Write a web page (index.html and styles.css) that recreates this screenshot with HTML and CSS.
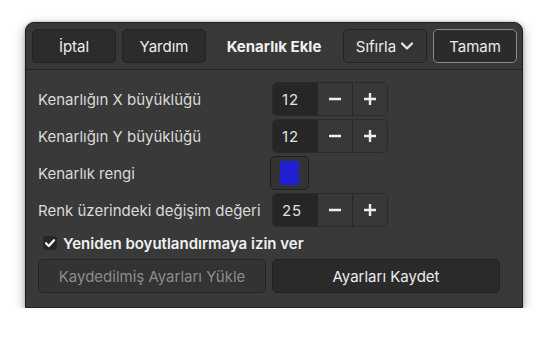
FILE: index.html
```html
<!DOCTYPE html>
<html lang="tr">
<head>
    <meta charset="UTF-8">
    <title>Kenarlık Ekle</title>
    <link rel="stylesheet" href="styles.css">
</head>
<body>
    <div class="window">
        <header class="headerbar">
            <div class="side">
                <button class="btn">İptal</button>
                <button class="btn">Yardım</button>
            </div>
            <h1 class="title">Kenarlık Ekle</h1>
            <div class="side right">
                <button class="btn menu">Sıfırla
                    <svg width="14" height="14" viewBox="0 0 14 14"><path d="M2 4.5 L7 9.5 L12 4.5" fill="none" stroke="#e8e8e8" stroke-width="2.2" stroke-linecap="round" stroke-linejoin="round"/></svg>
                </button>
                <button class="btn default">Tamam</button>
            </div>
        </header>
        <div class="content">
            <div class="form">
                <label class="label">Kenarlığın X büyüklüğü</label>
                <div class="spin">
                    <span class="value">12</span>
                    <button class="step"><svg width="14" height="14" viewBox="0 0 14 14"><path d="M1 7 H13" stroke="#eee" stroke-width="2.4"/></svg></button>
                    <button class="step"><svg width="14" height="14" viewBox="0 0 14 14"><path d="M1 7 H13 M7 1 V13" stroke="#eee" stroke-width="2.4"/></svg></button>
                </div>

                <label class="label">Kenarlığın Y büyüklüğü</label>
                <div class="spin">
                    <span class="value">12</span>
                    <button class="step"><svg width="14" height="14" viewBox="0 0 14 14"><path d="M1 7 H13" stroke="#eee" stroke-width="2.4"/></svg></button>
                    <button class="step"><svg width="14" height="14" viewBox="0 0 14 14"><path d="M1 7 H13 M7 1 V13" stroke="#eee" stroke-width="2.4"/></svg></button>
                </div>

                <label class="label">Kenarlık rengi</label>
                <div class="color-row">
                    <button class="color-btn"><span class="swatch"></span></button>
                </div>

                <label class="label">Renk üzerindeki değişim değeri</label>
                <div class="spin">
                    <span class="value">25</span>
                    <button class="step"><svg width="14" height="14" viewBox="0 0 14 14"><path d="M1 7 H13" stroke="#eee" stroke-width="2.4"/></svg></button>
                    <button class="step"><svg width="14" height="14" viewBox="0 0 14 14"><path d="M1 7 H13 M7 1 V13" stroke="#eee" stroke-width="2.4"/></svg></button>
                </div>
            </div>
            <div class="check-row">
                <span class="check">
                    <svg width="12" height="12" viewBox="0 0 12 12"><path d="M2 6.2 L4.8 9 L10 3.2" fill="none" stroke="#fff" stroke-width="2.2" stroke-linecap="round" stroke-linejoin="round"/></svg>
                </span>
                <span class="check-text">Yeniden boyutlandırmaya izin ver</span>
            </div>
            <div class="actions">
                <button class="btn wide disabled">Kaydedilmiş Ayarları Yükle</button>
                <button class="btn wide">Ayarları Kaydet</button>
            </div>
        </div>
    </div>
</body>
</html>
```

FILE: styles.css
```css
* {
    box-sizing: border-box;
    margin: 0;
    padding: 0;
    font-family: "Inter", "Noto Sans", sans-serif;
}
body {
    background-color: #ffffff;
    padding: 22px 0 0 25px;
}
.window {
    width: 498px;
    height: 286px;
    background-color: #393939;
    border: 1px solid #1f1f1f;
    border-radius: 9px 9px 0 0;
    box-shadow: 0 4px 12px rgba(0, 0, 0, 0.35), 0 0 3px rgba(0, 0, 0, 0.25);
    overflow: hidden;
}
.headerbar {
    height: 47px;
    display: flex;
    align-items: center;
    justify-content: space-between;
    padding: 0 5px 0 6px;
    background-color: #383838;
    border-bottom: 1px solid #232323;
    position: relative;
}
.side {
    display: flex;
    gap: 6px;
}
.title {
    position: absolute;
    left: 0;
    right: 0;
    text-align: center;
    font-size: 15px;
    font-weight: 700;
    color: #f0f0f0;
    pointer-events: none;
}
.btn {
    height: 34px;
    width: 84px;
    border-radius: 5px;
    border: 1px solid #232323;
    background-color: #2c2c2c;
    color: #ececec;
    font-size: 15px;
    display: flex;
    align-items: center;
    justify-content: center;
    gap: 4px;
}
.btn.menu {
    background-color: #353535;
    border-color: #222;
}
.btn.default {
    border-color: #8a8a8a;
    background-color: #2b2b2b;
}
.content {
    padding: 12px 0 0 12px;
}
.form {
    display: grid;
    grid-template-columns: 224px auto;
    column-gap: 10px;
    row-gap: 3px;
    align-items: center;
}
.label {
    font-size: 15px;
    color: #dadada;
}
.spin {
    display: flex;
    width: 116px;
    height: 34px;
    border: 1px solid #2a2a2a;
    border-radius: 5px;
    overflow: hidden;
    background-color: #3a3a3a;
}
.spin .value {
    width: 45px;
    background-color: #262626;
    color: #e0e0e0;
    font-size: 15px;
    display: flex;
    align-items: center;
    padding-left: 9px;
    letter-spacing: 0.8px;
}
.spin .step {
    width: 35px;
    background-color: #383838;
    border: none;
    border-left: 1px solid #262626;
    display: flex;
    align-items: center;
    justify-content: center;
}
.spin .step:last-child {
    width: 36px;
}
.color-row {
    height: 34px;
    display: flex;
}
.color-btn {
    margin-left: -2px;
    width: 39px;
    height: 34px;
    border: 1px solid #1f1f1f;
    border-radius: 5px;
    background-color: #333333;
    display: flex;
    align-items: center;
    justify-content: center;
}
.swatch {
    width: 19px;
    height: 24px;
    background-color: #2121d2;
}
.check-row {
    display: flex;
    align-items: center;
    height: 32px;
    padding-left: 5px;
}
.check {
    width: 14px;
    height: 14px;
    border-radius: 3px;
    background-color: #262626;
    display: flex;
    align-items: center;
    justify-content: center;
    margin-right: 6px;
}
.check-text {
    font-size: 15px;
    font-weight: 600;
    color: #f0f0f0;
}
.actions {
    display: flex;
    gap: 6px;
}
.btn.wide {
    width: 228px;
    background-color: #2a2a2a;
    border-color: #222;
}
.btn.disabled {
    color: #8c8c8c;
    background-color: #333333;
}
```
